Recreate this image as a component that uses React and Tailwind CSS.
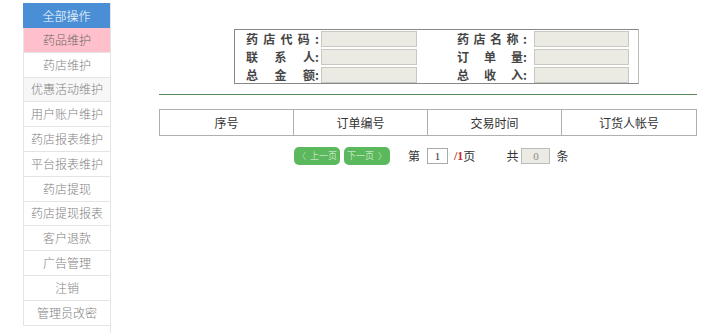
import React from "react";

const items = [
  "药品维护",
  "药店维护",
  "优惠活动维护",
  "用户账户维护",
  "药店报表维护",
  "平台报表维护",
  "药店提现",
  "药店提现报表",
  "客户退款",
  "广告管理",
  "注销",
  "管理员改密",
];

function Label({ chars, w }) {
  return (
    <div className="flex justify-between font-semibold text-[12px] text-[#444] leading-[16px]" style={{ width: w }}>
      {chars.map((c, i) => (
        <span key={i}>{c}</span>
      ))}
    </div>
  );
}

export default function App() {
  const font = { fontFamily: '"Noto Sans CJK SC", "Liberation Sans", sans-serif' };
  return (
    <div className="flex pl-[23px] pt-[3px] bg-white min-h-[333px]" style={font}>
      <div className="w-[88px] flex flex-col border-r border-[#e4e4e4]">
        <div className="h-[25px] bg-[#4a8fd6] text-white text-[12px] flex items-center justify-center font-light">全部操作</div>
        {items.map((t, i) => (
          <div
            key={t}
            className={
              "h-[24.8px] flex items-center justify-center text-[12px] font-light border-b border-l border-[#e4e4e4] " +
              (i === 0 ? "bg-[#ffc0cb] text-[#666]" : i === 2 ? "bg-[#f7f7f7] text-[#808080]" : "bg-white text-[#808080]")
            }
          >
            {t}
          </div>
        ))}
      </div>
      <div className="ml-[48px] w-[538px] flex flex-col">
        <div className="mt-[26px] ml-[75px] w-[405px] h-[55px] border border-[#888] border-r-[#bbb] flex flex-col gap-[1px] pt-[1px]">
          {[
            [["药", "店", "代", "码", ":"], ["药", "店", "名", "称", ":"]],
            [["联", "系", "人:"], ["订", "单", "量:"]],
            [["总", "金", "额:"], ["总", "收", "入:"]],
          ].map((row, i) => (
            <div key={i} className="flex items-center h-[17px]">
              <div className="ml-[11px]">
                <Label chars={row[0]} w={73} />
              </div>
              <div className="ml-[2px]">
                <div className="w-[96px] h-[16px] bg-[#ecebe3] border border-[#c8c8c0]" />
              </div>
              <div className="ml-[40px]">
                <Label chars={row[1]} w={70} />
              </div>
              <div className="ml-[7px]">
                <div className="w-[95px] h-[16px] bg-[#ecebe3] border border-[#c8c8c0]" />
              </div>
            </div>
          ))}
        </div>
        <div className="mt-[10px] h-[1px] bg-[#5b8a5b]" />
        <div className="mt-[14px] h-[27px] grid grid-cols-4 border border-[#b0b0b0] text-[12px] text-[#333]">
          {["序号", "订单编号", "交易时间", "订货人帐号"].map((h, i) => (
            <div key={h} className={"flex items-center justify-center " + (i < 3 ? "border-r border-[#b0b0b0]" : "")}>
              {h}
            </div>
          ))}
        </div>
        <div className="mt-[11px] ml-[135px] flex items-center text-[12px] text-[#333]">
          <div className="w-[46px] h-[18px] rounded-[5px] bg-[#5cb85c] text-[#eef8ee] text-[9px] font-light flex items-center justify-center gap-[4px]">
            <span className="text-[#cfe9cf]">〈</span>上一页
          </div>
          <div className="ml-[4px] w-[46px] h-[18px] rounded-[5px] bg-[#5cb85c] text-[#eef8ee] text-[9px] font-light flex items-center justify-center gap-[4px]">
            下一页<span className="text-[#cfe9cf]">〉</span>
          </div>
          <span className="ml-[18px]">第</span>
          <div className="ml-[7px] w-[21px] h-[16px] border border-[#aaa] bg-white flex items-center justify-center text-[11px]" style={{ fontFamily: '"Liberation Serif", serif' }}>1</div>
          <span className="ml-[6px] text-[#c0302a] font-bold" style={{ fontFamily: '"Liberation Serif", serif' }}>/1</span>
          <span>页</span>
          <span className="ml-[31px]">共</span>
          <div className="ml-[3px] w-[29px] h-[16px] border border-[#bbb] bg-[#ecebe3] flex items-center justify-center text-[11px] text-[#888]" style={{ fontFamily: '"Liberation Serif", serif' }}>0</div>
          <span className="ml-[6px]">条</span>
        </div>
      </div>
    </div>
  );
}
